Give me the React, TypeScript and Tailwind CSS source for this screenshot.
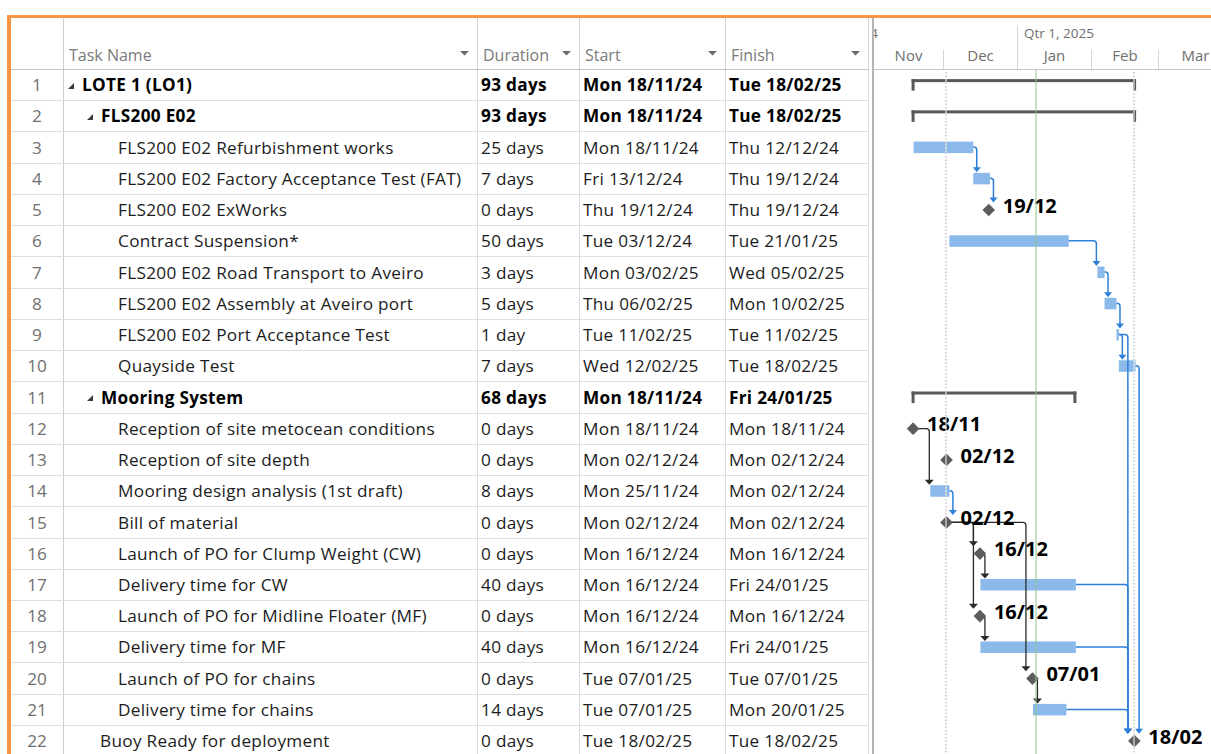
import React from "react";

type Task = {
  id: number;
  name: string;
  duration: string;
  start: string;
  finish: string;
  level: number;
  summary?: boolean;
  eod?: boolean; // milestone sits at the end of the day
};

const tasks: Task[] = [
  { id: 1, name: "LOTE 1 (LO1)", duration: "93 days", start: "Mon 18/11/24", finish: "Tue 18/02/25", level: 1, summary: true },
  { id: 2, name: "FLS200 E02", duration: "93 days", start: "Mon 18/11/24", finish: "Tue 18/02/25", level: 2, summary: true },
  { id: 3, name: "FLS200 E02 Refurbishment works", duration: "25 days", start: "Mon 18/11/24", finish: "Thu 12/12/24", level: 3 },
  { id: 4, name: "FLS200 E02 Factory Acceptance Test (FAT)", duration: "7 days", start: "Fri 13/12/24", finish: "Thu 19/12/24", level: 3 },
  { id: 5, name: "FLS200 E02 ExWorks", duration: "0 days", start: "Thu 19/12/24", finish: "Thu 19/12/24", level: 3, eod: true },
  { id: 6, name: "Contract Suspension*", duration: "50 days", start: "Tue 03/12/24", finish: "Tue 21/01/25", level: 3 },
  { id: 7, name: "FLS200 E02 Road Transport to Aveiro", duration: "3 days", start: "Mon 03/02/25", finish: "Wed 05/02/25", level: 3 },
  { id: 8, name: "FLS200 E02 Assembly at Aveiro port", duration: "5 days", start: "Thu 06/02/25", finish: "Mon 10/02/25", level: 3 },
  { id: 9, name: "FLS200 E02 Port Acceptance Test", duration: "1 day", start: "Tue 11/02/25", finish: "Tue 11/02/25", level: 3 },
  { id: 10, name: "Quayside Test", duration: "7 days", start: "Wed 12/02/25", finish: "Tue 18/02/25", level: 3 },
  { id: 11, name: "Mooring System", duration: "68 days", start: "Mon 18/11/24", finish: "Fri 24/01/25", level: 2, summary: true },
  { id: 12, name: "Reception of site metocean conditions", duration: "0 days", start: "Mon 18/11/24", finish: "Mon 18/11/24", level: 3 },
  { id: 13, name: "Reception of site depth", duration: "0 days", start: "Mon 02/12/24", finish: "Mon 02/12/24", level: 3 },
  { id: 14, name: "Mooring design analysis (1st draft)", duration: "8 days", start: "Mon 25/11/24", finish: "Mon 02/12/24", level: 3 },
  { id: 15, name: "Bill of material", duration: "0 days", start: "Mon 02/12/24", finish: "Mon 02/12/24", level: 3 },
  { id: 16, name: "Launch of PO for Clump Weight (CW)", duration: "0 days", start: "Mon 16/12/24", finish: "Mon 16/12/24", level: 3 },
  { id: 17, name: "Delivery time for CW", duration: "40 days", start: "Mon 16/12/24", finish: "Fri 24/01/25", level: 3 },
  { id: 18, name: "Launch of PO for Midline Floater (MF)", duration: "0 days", start: "Mon 16/12/24", finish: "Mon 16/12/24", level: 3 },
  { id: 19, name: "Delivery time for MF", duration: "40 days", start: "Mon 16/12/24", finish: "Fri 24/01/25", level: 3 },
  { id: 20, name: "Launch of PO for chains", duration: "0 days", start: "Tue 07/01/25", finish: "Tue 07/01/25", level: 3 },
  { id: 21, name: "Delivery time for chains", duration: "14 days", start: "Tue 07/01/25", finish: "Mon 20/01/25", level: 3 },
  { id: 22, name: "Buoy Ready for deployment", duration: "0 days", start: "Tue 18/02/25", finish: "Tue 18/02/25", level: 2, eod: true },
];

const links: [number, number][] = [
  [3, 4], [4, 5], [6, 7], [7, 8], [8, 9], [9, 10], [9, 22], [10, 22],
  [12, 14], [14, 15], [15, 16], [15, 18], [15, 20], [16, 17], [18, 19], [20, 21],
  [17, 22], [19, 22], [21, 22],
];

// timescale: 1 Nov 2024 sits at x=873, one month ~74px
const PX = 74 / 31;
const X0 = 873;
const ROW = 31.24;
const TOP = 70;
const monthOffset: Record<number, number> = { 11: 0, 12: 30, 1: 61, 2: 92, 3: 120 };

const x = (day: number) => X0 + day * PX;
const cy = (row: number) => TOP + (row - 0.5) * ROW;
const dayOf = (s: string) => {
  const [d, m] = s.split(" ")[1].split("/").map(Number);
  return monthOffset[m] + d - 1;
};
const byId = (id: number) => tasks.find((t) => t.id === id)!;
const isMilestone = (t: Task) => t.duration === "0 days";
const milestoneX = (t: Task) => x(dayOf(t.start) + (t.eod ? 0.7 : 0)) - 0.5;
const barSpan = (t: Task): [number, number] => [x(dayOf(t.start)), x(dayOf(t.finish) + 1)];

const indent: Record<string, string> = {
  "1s": "pl-[4px]",
  "2s": "pl-[23px]",
  "2": "pl-[36px]",
  "3": "pl-[54px]",
};

function DropArrow() {
  return (
    <svg width="9" height="5" viewBox="0 0 9 5" className="mb-[9px] shrink-0">
      <polygon points="0,0 9,0 4.5,4.5" fill="#6a6a6a" />
    </svg>
  );
}

function HeadCell({ label, width }: { label: string; width: string }) {
  return (
    <div className={`flex items-end justify-between border-r border-[#d4d4d4] pb-[4px] pl-[5px] pr-[8px] ${width}`}>
      <span className="leading-[20px]">{label}</span>
      <DropArrow />
    </div>
  );
}

function TaskRow({ t }: { t: Task }) {
  const bold = t.summary ? "font-bold text-black" : "";
  const pad = indent[t.summary ? `${t.level}s` : `${t.level}`];
  return (
    <div className="flex h-[31.24px] border-b border-[#dedede]">
      <div className="flex w-[53px] items-center justify-center border-r border-[#cfcfcf] tracking-normal text-[#707070]">{t.id}</div>
      <div className={`flex w-[414px] items-center overflow-hidden whitespace-nowrap border-r border-[#dcdcdc] ${pad} ${bold}`}>
        {t.summary && (
          <svg width="6" height="6" viewBox="0 0 6 6" className="mr-[8px] mt-[1px] shrink-0">
            <polygon points="6,0 6,6 0,6" fill="#3a3a3a" />
          </svg>
        )}
        {t.name}
      </div>
      <div className={`flex w-[102px] items-center border-r border-[#dcdcdc] pl-[3px] ${bold}`}>{t.duration}</div>
      <div className={`flex w-[146px] items-center border-r border-[#dcdcdc] pl-[3px] ${bold}`}>{t.start}</div>
      <div className={`flex w-[143px] items-center border-r border-[#dcdcdc] pl-[3px] ${bold}`}>{t.finish}</div>
    </div>
  );
}

function TaskTable() {
  return (
    <div className="w-[858px] shrink-0 text-[17.2px] tracking-[0.3px] text-[#1c1c1c]">
      <div className="flex h-[52px] border-b border-[#c6c6c6] text-[16px] tracking-normal text-[#7a7a7a]">
        <div className="w-[53px] border-r border-[#cfcfcf]" />
        <HeadCell label="Task Name" width="w-[414px]" />
        <HeadCell label="Duration" width="w-[102px]" />
        <HeadCell label="Start" width="w-[146px]" />
        <HeadCell label="Finish" width="w-[143px]" />
      </div>
      {tasks.map((t) => (
        <TaskRow key={t.id} t={t} />
      ))}
    </div>
  );
}

function GanttChart() {
  const blue = "#2d7fd8";
  const black = "#2a2a2a";
  return (
    <svg width="337" height="687" viewBox="874 70 337 687" className="block">
      {/* task bars */}
      {tasks
        .filter((t) => !t.summary && !isMilestone(t))
        .map((t) => {
          const [a, b] = barSpan(t);
          return <rect key={t.id} x={a} y={cy(t.id) - 6.5} width={b - a} height={11.5} fill="#8ab9ea" />;
        })}

      {/* summary brackets */}
      {tasks
        .filter((t) => t.summary)
        .map((t) => {
          const a = x(dayOf(t.start)) - 2;
          const b = x(dayOf(t.finish) + 1) + 0.5;
          const top = cy(t.id) - 6.5;
          return (
            <g key={t.id} fill="#595959">
              <rect x={a} y={top} width={b - a} height={3} />
              <rect x={a} y={top} width={3} height={11.5} />
              <rect x={b - 3} y={top} width={3} height={11.5} />
            </g>
          );
        })}

      {/* dependency links */}
      {links.map(([from, to]) => {
        const a = byId(from);
        const b = byId(to);
        const fromMs = isMilestone(a);
        const sx = fromMs ? milestoneX(a) : barSpan(a)[1];
        const sy = fromMs ? cy(a.id) - 0.6 : cy(a.id) - 1;
        const targetLeft = isMilestone(b) ? milestoneX(b) - 6.5 : barSpan(b)[0] - 1;
        const vx = Math.max(sx + (fromMs ? 5 : 3.5), targetLeft);
        const tip = isMilestone(b) ? cy(b.id) - 8 : cy(b.id) - 7;
        const color = fromMs ? black : blue;
        const half = fromMs ? 4.5 : 4;
        return (
          <g key={`${from}-${to}`}>
            <path
              d={`M${sx} ${sy} H${vx - 3} Q${vx} ${sy} ${vx} ${sy + 3} V${tip - 4}`}
              fill="none"
              stroke={color}
              strokeWidth={fromMs ? 1.3 : 1.5}
            />
            <polygon points={`${vx - half},${tip - 5} ${vx + half},${tip - 5} ${vx},${tip}`} fill={color} />
          </g>
        );
      })}

      {/* milestones */}
      {tasks.filter(isMilestone).map((t) => {
        const mx = milestoneX(t);
        const my = cy(t.id) - 0.6;
        return (
          <g key={t.id}>
            <polygon points={`${mx},${my - 6.3} ${mx + 6.3},${my} ${mx},${my + 6.3} ${mx - 6.3},${my}`} fill="#5c5c5c" />
            <text x={mx + 14} y={cy(t.id) + 2} fontSize="20" fontWeight="700" fill="#000">
              {t.finish.split(" ")[1].slice(0, 5)}
            </text>
          </g>
        );
      })}

      {/* project start / finish markers and status date */}
      {[946, 1134].map((lx) => (
        <g key={lx}>
          <line x1={lx} y1={70} x2={lx} y2={757} stroke="#fff" strokeWidth="1" />
          <line x1={lx} y1={72} x2={lx} y2={757} stroke="#a8a8a8" strokeWidth="1" strokeDasharray="1.5 2" />
        </g>
      ))}
      <line x1={1036} y1={70} x2={1036} y2={757} stroke="#8cc68c" strokeWidth="1" />
    </svg>
  );
}

function Gantt() {
  const months = [
    { m: "Nov", w: "w-[69px]", b: "" },
    { m: "Dec", w: "w-[74px]", b: "border-l" },
    { m: "Jan", w: "w-[74px]", b: "border-l" },
    { m: "Feb", w: "w-[67px]", b: "border-l" },
    { m: "Mar", w: "w-[74px]", b: "border-l" },
  ];
  return (
    <div className="min-w-0 flex-1 overflow-hidden">
      <div className="h-[52px] overflow-hidden border-b border-[#c6c6c6] pt-[7px] text-[#6e6e6e]">
        <div className="flex h-[25px] text-[13.5px] leading-[16px]">
          <div className="w-[143px] shrink-0 overflow-hidden whitespace-nowrap">
            <span className="-ml-[66px] block">Qtr 4, 2024</span>
          </div>
          <div className="flex-1 whitespace-nowrap border-l border-[#d6d6d6] pl-[6px]">Qtr 1, 2025</div>
        </div>
        <div className="flex h-[19px] text-[15px] leading-[10px]">
          {months.map((mo) => (
            <div key={mo.m} className={`flex shrink-0 justify-center border-[#d6d6d6] ${mo.w} ${mo.b}`}>
              {mo.m}
            </div>
          ))}
        </div>
      </div>
      <GanttChart />
    </div>
  );
}

export default function App() {
  return (
    <div className="h-[754px] w-[1211px] overflow-hidden bg-white pl-[7px] pt-[15px] font-['Open_Sans',sans-serif]">
      <div className="flex h-full border-l-4 border-t-[3px] border-[#f79646]">
        <TaskTable />
        <div className="h-full w-[5px] shrink-0 border-r-2 border-[#b4b4b4]" />
        <Gantt />
      </div>
    </div>
  );
}
